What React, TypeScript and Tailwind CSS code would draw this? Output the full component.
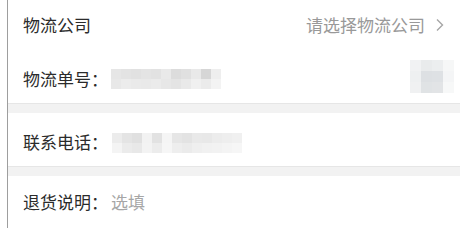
import React from "react";

const font = { fontFamily: '"Noto Sans CJK SC", "Noto Sans", sans-serif' };

function Mosaic({ cells, cols, size }: { cells: string[]; cols: number; size: number }) {
  return (
    <div
      className="grid"
      style={{ gridTemplateColumns: `repeat(${cols}, ${size}px)`, gridAutoRows: `${size}px` }}
    >
      {cells.map((c, i) => (
        <div key={i} style={{ backgroundColor: c }} />
      ))}
    </div>
  );
}

const row2Cells = [
  "#e6e6e6", "#e3e3e3", "#e1e1e1", "#e4e4e4", "#e2e2e2", "#e9e9e9", "#dcdcdc", "#e0e0e0", "#e9e9e9", "#d6d6d6", "#eeeeee",
  "#e8e8e8", "#ececec", "#eaeaea", "#e9e9e9", "#ebebeb", "#e7e7e7", "#e4e4e4", "#e9e9e9", "#f0f0f0", "#ebebeb", "#f3f3f3",
];

const row3Cells = [
  "#ececec", "#e4e4e4", "#e0e0e0", "#f2f2f2", "#e2e2e2", "#f5f5f5", "#e6e6e6", "#e3e3e3", "#e9e9e9", "#e8e8e8", "#ececec", "#eeeeee", "#f0f0f0",
  "#f4f4f4", "#ebebeb", "#e8e8e8", "#f3f3f3", "#ececec", "#f6f6f6", "#eeeeee", "#ebebeb", "#efefef", "#f1f1f1", "#f2f2f2", "#f4f4f4", "#f6f6f6",
];

const rightCells = [
  "#f1f2f3", "#e9ebec", "#eceeef", "#f6f7f7",
  "#eef0f1", "#dde0e3", "#dee1e4", "#f4f5f6",
  "#f0f1f2", "#e0e3e5", "#e2e4e6", "#f7f8f8",
];

export default function App() {
  return (
    <div className="w-[470px] h-[228px] bg-white flex overflow-hidden" style={font}>
      <div className="w-[7px] shrink-0" />
      <div className="w-px shrink-0 bg-[#9e9e9e]" />
      <div className="w-[452px] shrink-0 flex flex-col text-[17px] text-[#2b2b2b]">
        <div className="h-[50px] flex items-center justify-between pl-[15px] pr-[16px]">
          <span>物流公司</span>
          <span className="flex items-center text-[#999999]">
            请选择物流公司
            <svg className="ml-[11px]" width="8" height="14" viewBox="0 0 8 14" fill="none">
              <path d="M1 1.5 L6.5 7 L1 12.5" stroke="#a6a6a6" strokeWidth="1.4" />
            </svg>
          </span>
        </div>
        <div className="h-[53px] flex items-center pl-[15px] pt-[5px]">
          <span className="w-[88px] shrink-0">物流单号：</span>
          <Mosaic cells={row2Cells} cols={11} size={10} />
          <div className="ml-auto mb-[6px] mr-[6px]">
            <Mosaic cells={rightCells} cols={4} size={11} />
          </div>
        </div>
        <div className="h-[10px] bg-[#f2f2f2] border-t border-[#e6e6e6]" />
        <div className="h-[53px] flex items-center pl-[15px] pt-[4px]">
          <span className="w-[89px] shrink-0">联系电话：</span>
          <div className="mt-[2px]">
            <Mosaic cells={row3Cells} cols={13} size={10} />
          </div>
        </div>
        <div className="h-[10px] bg-[#f2f2f2] border-t border-[#e6e6e6]" />
        <div className="h-[52px] flex items-center pl-[15px]">
          <span className="w-[88px] shrink-0">退货说明：</span>
          <span className="text-[#a6a6a6]">选填</span>
        </div>
      </div>
    </div>
  );
}
